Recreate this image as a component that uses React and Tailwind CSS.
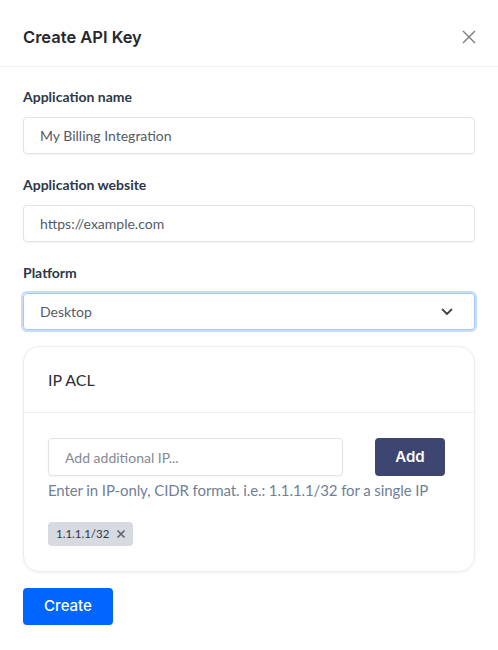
import { useState } from 'react';

const body = { fontFamily: 'Lato, "Noto Sans", sans-serif' };
const heading = { fontFamily: 'Inter, "Noto Sans", sans-serif' };

function Field({ label, value }) {
  return (
    <div className="mb-[21px]">
      <label className="block text-[14px] leading-5 font-bold text-[#2d3748] mb-[10px]">{label}</label>
      <input
        className="w-full h-[37px] px-4 text-[14px] text-[#555b66] border border-[#e3e3e3] rounded-[4px] shadow-[0_1px_2px_rgba(0,0,0,0.05)] outline-none"
        defaultValue={value}
      />
    </div>
  );
}

export default function App() {
  const [ips, setIps] = useState(['1.1.1.1/32']);

  return (
    <div className="w-[498px] min-h-[650px] bg-white" style={body}>
      <div className="h-[67px] pt-2 px-[23px] flex items-center justify-between border-b border-[#eef2f7]">
        <h2 className="text-[16.5px] font-semibold text-[#26282e]" style={heading}>Create API Key</h2>
        <button className="text-[#7b7b7b] mr-[-2px]">
          <svg width="16" height="16" viewBox="0 0 16 16" fill="none" stroke="currentColor" strokeWidth="1.4">
            <path d="M2 2L14 14M14 2L2 14" />
          </svg>
        </button>
      </div>

      <div className="px-[23px] pt-5">
        <Field label="Application name" value="My Billing Integration" />
        <Field label="Application website" value="https://example.com" />

        <label className="block text-[14px] leading-5 font-bold text-[#2d3748] mb-[10px]">Platform</label>
        <div className="relative h-[37px] border border-[#a9c9f8] ring-2 ring-[#c8dcfb] rounded-[4px] flex items-center justify-between pl-4 pr-[21px]">
          <span className="text-[14px] text-[#555b66]">Desktop</span>
          <svg width="12" height="8" viewBox="0 0 12 8" fill="none" stroke="#3f4654" strokeWidth="1.8" strokeLinecap="round" strokeLinejoin="round">
            <path d="M1.5 1.5L6 6L10.5 1.5" />
          </svg>
        </div>

        <div className="mt-4 rounded-2xl border border-[#e9edf2] shadow-[0_1px_3px_rgba(0,0,0,0.06)]">
          <div className="h-[66px] px-[24px] flex items-center border-b border-[#eceff3]">
            <span className="text-[16px] text-[#2d3036]">IP ACL</span>
          </div>
          <div className="pl-[24px] pr-[29px] pt-[25px] pb-[25px]">
            <div className="flex items-center justify-between">
              <input
                className="w-[295px] h-[38px] px-4 text-[14px] border border-[#e3e3e3] rounded-[4px] shadow-[0_1px_2px_rgba(0,0,0,0.05)] outline-none placeholder:text-[#858a93]"
                placeholder="Add additional IP..."
              />
              <button className="w-[70px] h-[38px] rounded-[4px] bg-[#3d4670] text-white text-[15px] font-semibold" style={heading}>
                Add
              </button>
            </div>
            <p className="mt-[2px] text-[15px] leading-6 tracking-[-0.1px] text-[#718096] whitespace-nowrap">
              Enter in IP-only, CIDR format. i.e.: 1.1.1.1/32 for a single IP
            </p>
            <div className="mt-5 flex gap-2">
              {ips.map(ip => (
                <span key={ip} className="h-6 pl-[8px] pr-[7px] rounded-[4px] bg-[#d7dae1] flex items-center gap-[7px] text-[11.5px] text-[#2d3748]">
                  {ip}
                  <button onClick={() => setIps(ips.filter(i => i !== ip))} className="text-[#5f6672]">
                    <svg width="10" height="10" viewBox="0 0 10 10" fill="none" stroke="currentColor" strokeWidth="1.7">
                      <path d="M1.5 1.5L8.5 8.5M8.5 1.5L1.5 8.5" />
                    </svg>
                  </button>
                </span>
              ))}
            </div>
          </div>
        </div>

        <button className="mt-4 w-[90px] h-[37px] rounded-[4px] bg-[#0066ff] text-white text-[15px] font-medium" style={heading}>
          Create
        </button>
      </div>
    </div>
  );
}
